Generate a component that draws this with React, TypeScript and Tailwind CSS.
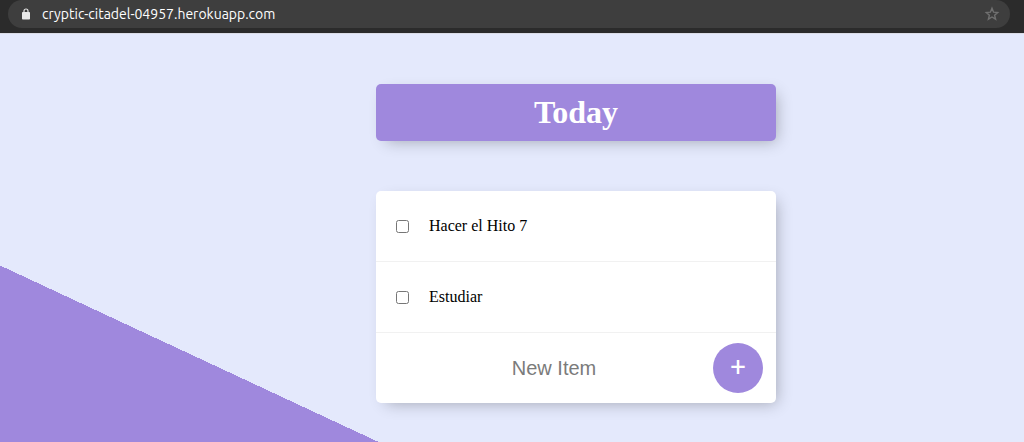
import { useState, type FormEvent } from "react";

function LockIcon() {
  return (
    <svg viewBox="0 0 12 12" className="mr-2.5 size-3" fill="none" aria-hidden="true">
      <rect x="2" y="4" width="8" height="7.5" rx="0.8" fill="#e8e8e8" />
      <path d="M4 4.5V3a2 2 0 0 1 4 0v1.5" stroke="#e8e8e8" strokeWidth="1.2" />
    </svg>
  );
}

function StarIcon() {
  return (
    <svg viewBox="0 0 16 16" className="size-4" fill="none" aria-hidden="true">
      <path
        d="M8 2.2 9.600 6.200 13.700 6.500 10.600 9.200 11.600 13.200 8 11 4.400 13.200 5.400 9.200 2.300 6.500 6.400 6.200Z"
        stroke="#707070"
        strokeWidth="1.4"
      />
    </svg>
  );
}

function AddressBar() {
  return (
    <header className="border-b border-[#dadce6] bg-[#2b2b2b] pr-3.5 pb-[5px] pl-2">
      <div className="flex h-7 items-center rounded-full bg-[#3e3e3e] pr-2.5 pl-3">
        <LockIcon />
        <span className="flex-1 font-[Ubuntu,'Noto_Sans',sans-serif] text-sm text-white">
          cryptic-citadel-04957.herokuapp.com
        </span>
        <button type="button" aria-label="Bookmark this page">
          <StarIcon />
        </button>
      </div>
    </header>
  );
}

function TodoItem({ text }: { text: string }) {
  return (
    <li className="border-b border-[#f1f1f1]">
      <label className="flex min-h-[70px] items-center px-5">
        <input type="checkbox" className="mr-5 size-[13px]" />
        <span>{text}</span>
      </label>
    </li>
  );
}

export default function App() {
  const [items, setItems] = useState(["Hacer el Hito 7", "Estudiar"]);
  const [draft, setDraft] = useState("");

  function addItem(event: FormEvent) {
    event.preventDefault();
    if (!draft.trim()) return;
    setItems([...items, draft.trim()]);
    setDraft("");
  }

  return (
    <div className="flex min-h-screen flex-col font-['Liberation_Serif',serif] text-base text-black">
      <AddressBar />
      <main className="flex flex-1 flex-col items-center gap-[50px] bg-[linear-gradient(25deg,#9f88dd_160px,#e4e9fc_160px)] pt-[50px] pb-[38px] pl-32">
        <h1 className="w-full max-w-[400px] rounded-[5px] bg-[#9f88dd] p-2.5 text-center text-[32px] leading-[37px] font-bold text-white shadow-[5px_5px_15px_-5px_rgba(0,0,0,0.3)]">
          Today
        </h1>
        <section className="w-full max-w-[400px] rounded-[5px] bg-white shadow-[5px_5px_15px_-5px_rgba(0,0,0,0.3)]">
          <ul>
            {items.map((item, index) => (
              <TodoItem key={index} text={item} />
            ))}
          </ul>
          <form onSubmit={addItem} className="flex min-h-[70px] items-center pr-[13px] pl-[19px]">
            <input
              type="text"
              aria-label="New Item"
              placeholder="New Item"
              value={draft}
              onChange={(event) => setDraft(event.target.value)}
              className="h-[60px] min-w-0 flex-1 bg-transparent text-center font-['Liberation_Sans',sans-serif] text-xl outline-none placeholder:text-[#7b7b7b]"
            />
            <button
              type="submit"
              aria-label="Add item"
              className="size-[50px] shrink-0 rounded-full bg-[#9f88dd] pb-1 font-['Noto_Sans',sans-serif] text-[28px] leading-none font-medium text-white"
            >
              +
            </button>
          </form>
        </section>
      </main>
    </div>
  );
}
